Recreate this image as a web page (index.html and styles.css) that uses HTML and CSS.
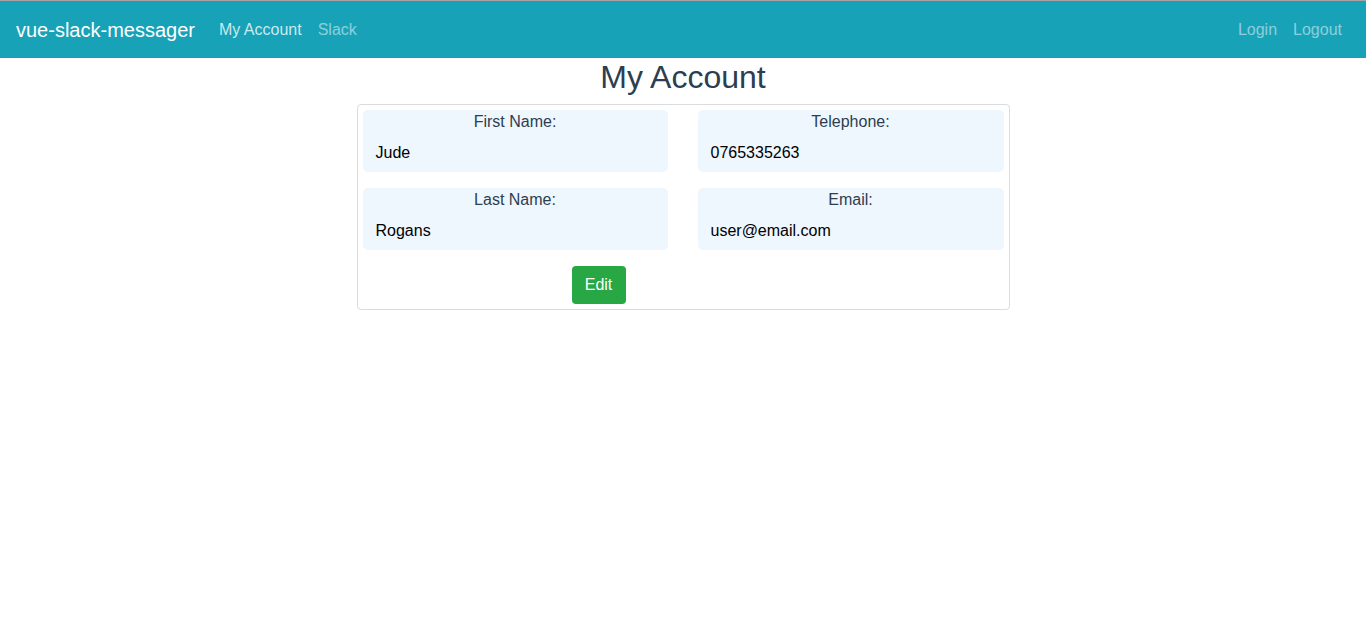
FILE: index.html
```html
<!DOCTYPE html>
<html lang="en">
<head>
<meta charset="utf-8">
<title>vue-slack-messager</title>
<link rel="stylesheet" href="styles.css">
</head>
<body>
<nav class="navbar">
  <a class="brand" href="#">vue-slack-messager</a>
  <ul class="nav">
    <li><a class="nav-link active" href="#">My Account</a></li>
    <li><a class="nav-link" href="#">Slack</a></li>
  </ul>
  <ul class="nav nav-right">
    <li><a class="nav-link" href="#">Login</a></li>
    <li><a class="nav-link" href="#">Logout</a></li>
  </ul>
</nav>
<main class="page">
  <h1 class="title">My Account</h1>
  <div class="card">
    <div class="grid">
      <div class="field">
        <div class="label">First Name:</div>
        <div class="value">Jude</div>
      </div>
      <div class="field">
        <div class="label">Telephone:</div>
        <div class="value">0765335263</div>
      </div>
      <div class="field">
        <div class="label">Last Name:</div>
        <div class="value">Rogans</div>
      </div>
      <div class="field">
        <div class="label">Email:</div>
        <div class="value">user@email.com</div>
      </div>
    </div>
    <div class="actions">
      <button class="btn-edit" type="button">Edit</button>
    </div>
  </div>
</main>
</body>
</html>
```

FILE: styles.css
```css
* { box-sizing: border-box; }
html, body {
  margin: 0;
  padding: 0;
  background: #fff;
  font-family: "Liberation Sans", Arial, sans-serif;
}
.navbar {
  height: 58px;
  background: #17a2b8;
  border-top: 1px solid #a7a3a3;
  display: flex;
  align-items: center;
  padding: 0 16px;
}
.brand {
  font-size: 20px;
  color: #fff;
  text-decoration: none;
  margin-right: 16px;
  line-height: 30px;
  padding-top: 1px;
}
.nav {
  list-style: none;
  margin: 0;
  padding: 0;
  display: flex;
}
.nav-right { margin-left: auto; }
.nav-link {
  display: block;
  padding: 8px;
  font-size: 16px;
  line-height: 24px;
  color: rgba(255, 255, 255, 0.5);
  text-decoration: none;
}
.nav-link.active { color: rgba(255, 255, 255, 0.78); }
.page {
  display: flex;
  flex-direction: column;
  align-items: center;
}
.title {
  margin: 0;
  font-size: 32px;
  line-height: 38px;
  font-weight: 400;
  color: #2c3e50;
}
.card {
  margin-top: 8px;
  width: 653px;
  border: 1px solid #dcdcdc;
  border-radius: 4px;
  padding: 5px;
}
.grid {
  display: grid;
  grid-template-columns: 305px 306px;
  column-gap: 30px;
  row-gap: 16px;
}
.field {
  background: #eef6fe;
  border-radius: 5px;
  height: 62px;
  padding: 0 13px;
}
.label {
  text-align: center;
  font-size: 16px;
  line-height: 24px;
  color: #2c3e50;
}
.value {
  margin-top: 7px;
  font-size: 16px;
  line-height: 24px;
  color: #000;
}
.actions {
  margin-top: 16px;
  padding-left: 209px;
  display: flex;
}
.btn-edit {
  width: 54px;
  height: 38px;
  background: #28a745;
  color: #fff;
  border: 0;
  border-radius: 4px;
  font-family: "Liberation Sans", Arial, sans-serif;
  font-size: 16px;
  padding: 0;
}
```
